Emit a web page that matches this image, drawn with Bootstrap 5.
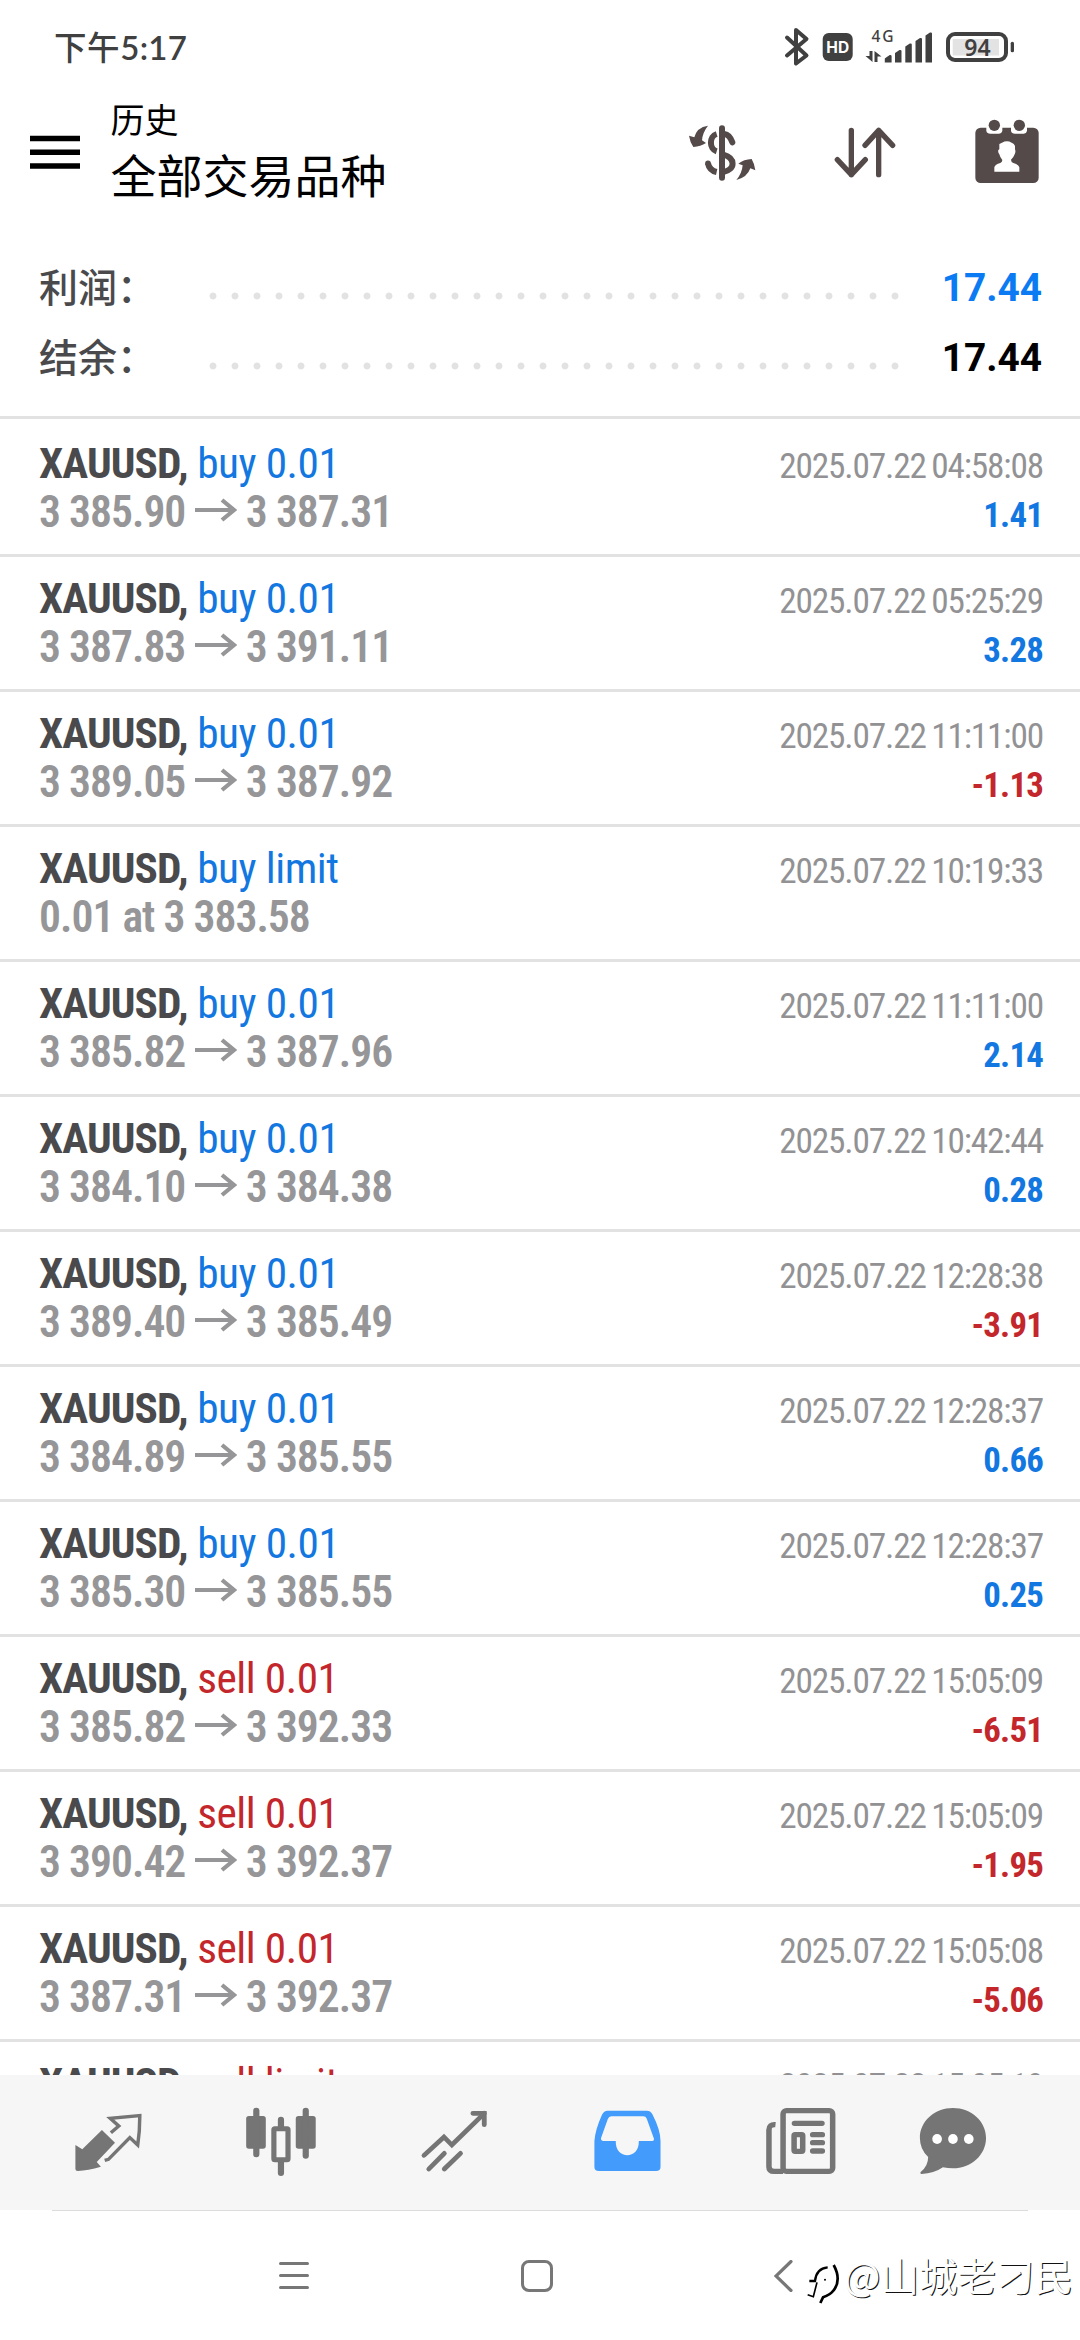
<!DOCTYPE html>
<html lang="zh-CN">
<head>
<meta charset="utf-8">
<meta name="viewport" content="width=device-width, initial-scale=1">
<title>历史</title>
<link href="https://cdn.jsdelivr.net/npm/bootstrap@5.3.0/dist/css/bootstrap.min.css" rel="stylesheet">
<style>
  body { width: 1080px; height: 2340px; overflow: hidden; background: #fff; color: #000; font-family: Roboto, "Noto Sans CJK SC", sans-serif; }
  .phone { height: 2340px; }
  .ico { display: block; flex: none; }
  .status { height: 94px; padding: 0 66px 0 54px; color: #404040; }
  .clock { font: 600 33px/94px Lato, "Noto Sans CJK SC", sans-serif; letter-spacing: .3px; margin-top: -2px; }
  .clock .zh { font: 500 32.5px/94px "Noto Sans CJK SC", sans-serif; letter-spacing: .6px; }
  .appbar { height: 138px; }
  .titles { margin-left: 29.5px; font-family: "Noto Sans CJK SC", sans-serif; font-weight: 400; }
  .t-sub { font-size: 34px; line-height: 50px; }
  .t-main { font-size: 46px; line-height: 59px; }
  .summary { height: 187px; padding: 21px 38px 0 39px; border-bottom: 3px solid #e2e2e3; }
  .sum-row { height: 70px; }
  .sum-label { width: 171px; margin: -6px -8px 0 0; font: 500 39px/70px "Noto Sans CJK SC", sans-serif; color: #4a4a4d; }
  .dots { width: 704px; height: 8px; margin-top: 16px; background: radial-gradient(circle at 50% 50%, #e2e2e3 3px, transparent 3.9px) 0 0 / 22px 8px repeat-x; }
  .sum-val { font: 700 38.8px/72px Roboto, sans-serif; }
  .deals { height: 1656px; overflow: hidden; }
  .deal { height: 135px; padding: 18px 37px 0 39px; border-bottom: 3px solid #e2e2e3; font-stretch: 75%; }
  .deal:first-child { height: 138px; padding-top: 21px; }
  .ln { height: 48px; line-height: 48px; white-space: nowrap; }
  .sym { font-size: 43.3px; letter-spacing: -.45px; }
  .sym b { color: #4a4a4d; font-weight: 700; letter-spacing: -.9px; }
  .prc { font-size: 43.7px; font-weight: 650; color: #969698; letter-spacing: -1px; }
  .dt { font-size: 35.3px; color: #929294; letter-spacing: -1.15px; word-spacing: -1.5px; }
  .val { font-size: 34.8px; font-weight: 700; letter-spacing: -.8px; }
  .c-buy { color: #1277e0; }
  .c-profit { color: #0a7bf3; }
  .c-sell { color: #c3272c; }
  .arr { margin: 0 8.500px 0 10px; vertical-align: baseline; position: relative; top: -5px; }
  .tabs { height: 135px; background: #f6f6f6; padding-left: 68px; gap: 93px; color: #757575; }
  .tabs .short { margin-left: -20px; }
  .sysnav { height: 130px; }
  .sysnav hr { width: 976px; height: 1px; margin: 0 auto; border: 0; background: #dcdcdc; opacity: 1; }
  .keys { height: 129px; padding-left: 279px; color: #777; }
  .wm { position: absolute; left: 805px; top: 2249px; color: #fff; font: 400 38.5px/50px "Noto Sans CJK SC", sans-serif; text-shadow: 1px 1px 0 #111; white-space: nowrap; }
</style>
</head>
<body>
<svg width="0" height="0" class="position-absolute"><symbol id="arr" viewBox="0 0 42 24"><path d="M0 12H38M27 2L39 12L27 22" fill="none" stroke="#969698" stroke-width="4.2"/></symbol></svg>
<div class="phone d-flex flex-column position-relative">
  <header class="status d-flex justify-content-between align-items-center">
    <div class="clock"><span class="zh">下午</span>5:17</div>
    <svg class="ico" width="234" height="50" viewBox="780 22 234 50" fill="#404040" font-family="Inter, sans-serif">
      <path d="M787 37.5L806.500 55.500L796 63.500V30L806.500 39L787 55.500" fill="none" stroke="#404040" stroke-width="4" stroke-linecap="round" stroke-linejoin="round"/>
      <rect x="822.700" y="33" width="30" height="28" rx="6"/>
      <text x="837.700" y="52.700" font-size="15.500" font-weight="700" fill="#fff" text-anchor="middle">HD</text>
      <text x="871.500" y="42" font-size="15.500" font-family="Noto Sans" font-weight="500" textLength="22">4G</text>
      <path d="M869.500 51h3v11l-7-6h4zM874.500 62V51l7 5.500h-4V62z"/>
      <path d="M884.800 62.500V58.500l2-1.500 3-2q1.500-.5 1.800 1v6.500zM895 62.500V53l4.500-3q2-.5 2 1v11.500zM905.300 62.500V46.500l4.500-3q2-.5 2 1v18zM915.500 62.500V41l4.500-3q2-.5 2 1v23.500zM925.500 62.500V35.500l4.500-3q2-.5 2 1v29z"/>
      <rect x="948" y="34" width="58" height="26" rx="7" fill="none" stroke="#404040" stroke-width="4"/>
      <rect x="952.700" y="39" width="46.300" height="16.500" fill="#e3e3e3"/>
      <rect x="1010.700" y="41.700" width="3.300" height="10.600" rx="1.600"/>
      <text x="977.500" y="55.700" font-size="23" font-family="Noto Sans" font-weight="600" text-anchor="middle">94</text>
    </svg>
  </header>

  <nav class="appbar d-flex">
    <svg class="ico ms-4" style="margin-top:10px" width="57" height="96" viewBox="24 104 57 96"><path d="M30 138.500h50M30 152.300h50M30 166h50" stroke="#000" stroke-width="5.600"/></svg>
    <div class="titles"><div class="t-sub">历史</div><div class="t-main">全部交易品种</div></div>
    <svg class="ico ms-auto" width="75" height="110" viewBox="135 280 225 330" preserveAspectRatio="none">
      <g fill="none" stroke="#554a4a" stroke-width="18">
        <path d="M246 383V531" stroke-linecap="round"/>
        <path d="M230 400C207 407 207 445 230 452" />
        <path d="M253 400Q269 402 277 425" stroke-linecap="round"/>
        <path d="M250 462C286 472 288 506 250 514"/>
        <path d="M204 488Q208 509 230 514"/>
      </g>
      <circle cx="204" cy="488" r="8.500" fill="#554a4a"/>
      <path d="M204 375Q170 380 163 410L147 405Q150 425 160 439Q182 438 198 427L186 419Q188 395 204 375ZM289 538Q322 530 331 503L346 509Q343 488 335 475Q312 476 295 489L308 494Q306 518 289 538Z" fill="#554a4a"/>
    </svg>
    <svg class="ico" style="margin-left:70px" width="70" height="110" viewBox="570 280 210 330"><path d="M634 389V522M592 477L634 522L676 477M716 522V389M675 434L716 389L758 434" fill="none" stroke="#554a4a" stroke-width="16" stroke-linecap="round" stroke-linejoin="round"/></svg>
    <svg class="ico" style="margin:0 34px 0 68px" width="78" height="110" viewBox="983 280 234 330">
      <rect x="1005" y="381" width="190" height="166" rx="16" fill="#554a4a"/>
      <g fill="#fff"><path d="M1038 376H1086V391Q1084 399 1076 399H1050Q1040 399 1038 391ZM1112 376H1160V391Q1158 399 1150 399H1124Q1114 399 1112 391Z"/>
      <path d="M1062 513V500Q1064 491 1080 487Q1086 484 1086 478Q1079 470 1077 461Q1072 455 1074 448L1077 446V430L1085 426Q1100 418 1114 426Q1122 428 1124 436V446Q1127 452 1123 461Q1120 470 1112 477Q1112 484 1119 487Q1135 492 1137 500V513Z"/></g>
      <circle cx="1062" cy="374" r="17" fill="#554a4a"/><circle cx="1137" cy="374" r="17" fill="#554a4a"/>
    </svg>
  </nav>

  <section class="summary">
    <div class="sum-row d-flex align-items-center"><span class="sum-label">利润：</span><span class="dots"></span><span class="sum-val ms-auto c-profit">17.44</span></div>
    <div class="sum-row d-flex align-items-center"><span class="sum-label">结余：</span><span class="dots"></span><span class="sum-val ms-auto">17.44</span></div>
  </section>

  <main class="deals">
    <div class="deal"><div class="ln d-flex justify-content-between align-items-baseline"><span class="sym"><b>XAUUSD,</b> <span class="c-buy">buy 0.01</span></span><span class="dt">2025.07.22 04:58:08</span></div><div class="ln d-flex justify-content-between align-items-baseline"><span class="prc">3 385.90<svg class="arr" width="42" height="24"><use href="#arr"/></svg>3 387.31</span><span class="val c-buy">1.41</span></div></div>
    <div class="deal"><div class="ln d-flex justify-content-between align-items-baseline"><span class="sym"><b>XAUUSD,</b> <span class="c-buy">buy 0.01</span></span><span class="dt">2025.07.22 05:25:29</span></div><div class="ln d-flex justify-content-between align-items-baseline"><span class="prc">3 387.83<svg class="arr" width="42" height="24"><use href="#arr"/></svg>3 391.11</span><span class="val c-buy">3.28</span></div></div>
    <div class="deal"><div class="ln d-flex justify-content-between align-items-baseline"><span class="sym"><b>XAUUSD,</b> <span class="c-buy">buy 0.01</span></span><span class="dt">2025.07.22 11:11:00</span></div><div class="ln d-flex justify-content-between align-items-baseline"><span class="prc">3 389.05<svg class="arr" width="42" height="24"><use href="#arr"/></svg>3 387.92</span><span class="val c-sell">-1.13</span></div></div>
    <div class="deal"><div class="ln d-flex justify-content-between align-items-baseline"><span class="sym"><b>XAUUSD,</b> <span class="c-buy">buy limit</span></span><span class="dt">2025.07.22 10:19:33</span></div><div class="ln d-flex align-items-baseline"><span class="prc">0.01 at 3 383.58</span></div></div>
    <div class="deal"><div class="ln d-flex justify-content-between align-items-baseline"><span class="sym"><b>XAUUSD,</b> <span class="c-buy">buy 0.01</span></span><span class="dt">2025.07.22 11:11:00</span></div><div class="ln d-flex justify-content-between align-items-baseline"><span class="prc">3 385.82<svg class="arr" width="42" height="24"><use href="#arr"/></svg>3 387.96</span><span class="val c-buy">2.14</span></div></div>
    <div class="deal"><div class="ln d-flex justify-content-between align-items-baseline"><span class="sym"><b>XAUUSD,</b> <span class="c-buy">buy 0.01</span></span><span class="dt">2025.07.22 10:42:44</span></div><div class="ln d-flex justify-content-between align-items-baseline"><span class="prc">3 384.10<svg class="arr" width="42" height="24"><use href="#arr"/></svg>3 384.38</span><span class="val c-buy">0.28</span></div></div>
    <div class="deal"><div class="ln d-flex justify-content-between align-items-baseline"><span class="sym"><b>XAUUSD,</b> <span class="c-buy">buy 0.01</span></span><span class="dt">2025.07.22 12:28:38</span></div><div class="ln d-flex justify-content-between align-items-baseline"><span class="prc">3 389.40<svg class="arr" width="42" height="24"><use href="#arr"/></svg>3 385.49</span><span class="val c-sell">-3.91</span></div></div>
    <div class="deal"><div class="ln d-flex justify-content-between align-items-baseline"><span class="sym"><b>XAUUSD,</b> <span class="c-buy">buy 0.01</span></span><span class="dt">2025.07.22 12:28:37</span></div><div class="ln d-flex justify-content-between align-items-baseline"><span class="prc">3 384.89<svg class="arr" width="42" height="24"><use href="#arr"/></svg>3 385.55</span><span class="val c-buy">0.66</span></div></div>
    <div class="deal"><div class="ln d-flex justify-content-between align-items-baseline"><span class="sym"><b>XAUUSD,</b> <span class="c-buy">buy 0.01</span></span><span class="dt">2025.07.22 12:28:37</span></div><div class="ln d-flex justify-content-between align-items-baseline"><span class="prc">3 385.30<svg class="arr" width="42" height="24"><use href="#arr"/></svg>3 385.55</span><span class="val c-buy">0.25</span></div></div>
    <div class="deal"><div class="ln d-flex justify-content-between align-items-baseline"><span class="sym"><b>XAUUSD,</b> <span class="c-sell">sell 0.01</span></span><span class="dt">2025.07.22 15:05:09</span></div><div class="ln d-flex justify-content-between align-items-baseline"><span class="prc">3 385.82<svg class="arr" width="42" height="24"><use href="#arr"/></svg>3 392.33</span><span class="val c-sell">-6.51</span></div></div>
    <div class="deal"><div class="ln d-flex justify-content-between align-items-baseline"><span class="sym"><b>XAUUSD,</b> <span class="c-sell">sell 0.01</span></span><span class="dt">2025.07.22 15:05:09</span></div><div class="ln d-flex justify-content-between align-items-baseline"><span class="prc">3 390.42<svg class="arr" width="42" height="24"><use href="#arr"/></svg>3 392.37</span><span class="val c-sell">-1.95</span></div></div>
    <div class="deal"><div class="ln d-flex justify-content-between align-items-baseline"><span class="sym"><b>XAUUSD,</b> <span class="c-sell">sell 0.01</span></span><span class="dt">2025.07.22 15:05:08</span></div><div class="ln d-flex justify-content-between align-items-baseline"><span class="prc">3 387.31<svg class="arr" width="42" height="24"><use href="#arr"/></svg>3 392.37</span><span class="val c-sell">-5.06</span></div></div>
    <div class="deal"><div class="ln d-flex justify-content-between align-items-baseline"><span class="sym"><b>XAUUSD,</b> <span class="c-sell">sell limit</span></span><span class="dt">2025.07.22 15:05:19</span></div></div>
  </main>

  <nav class="tabs d-flex align-items-center">
    <svg class="ico" width="80" height="80" viewBox="197.500 189 232.300 240" preserveAspectRatio="none">
      <path d="M296 270L334 308L281 366L293 380Q255 391 226 393Q219 393 219 387V315L239 328Z" fill="currentColor"/>
      <path d="M322 278L345 258L320 235L406 227Q406 275 400 315L377 293L315 358L304 361" fill="none" stroke="currentColor" stroke-width="10"/>
    </svg>
    <svg class="ico" width="80" height="80" viewBox="700 189 232.300 240" preserveAspectRatio="none" fill="currentColor">
      <rect x="715" y="228" width="57" height="98" rx="8"/><rect x="859" y="228" width="58" height="98" rx="8"/>
      <path d="M744.500 212V343M888 212V347M816 239V262M816 364V399" stroke="currentColor" stroke-width="18" stroke-linecap="round"/>
      <rect x="795.500" y="266.500" width="41" height="93" rx="3" fill="none" stroke="currentColor" stroke-width="15"/>
    </svg>
    <svg class="ico" width="80" height="80" viewBox="1202 189 232.300 240" preserveAspectRatio="none" fill="none" stroke="currentColor" stroke-width="14">
      <path d="M1231 346L1289 291L1312 315L1406 220" stroke-linecap="round"/><path d="M1373 220H1406V254" stroke-linecap="round"/>
      <path d="M1245 387L1290 340M1290 387L1337 340" stroke-linecap="round"/>
    </svg>
    <svg class="ico" width="80" height="80" viewBox="136.500 189 232.300 240" preserveAspectRatio="none">
      <path fill="#439cfc" fill-rule="evenodd" d="M196 212H310Q321 212 326 222Q350 270 350 303V380Q350 393 337 393H171Q158 393 158 380V303Q160 270 180 224Q186 212 196 212ZM207 229Q200 229 197 237L177 295Q177 303 184 303H220C218 360 289 360 287 303H326Q332 303 331 296L310 236Q307 229 300 229Z"/>
    </svg>
    <svg class="ico" width="80" height="80" viewBox="639 189 232.300 240" preserveAspectRatio="none" fill="none" stroke="currentColor" stroke-width="16">
      <rect x="706" y="212" width="144" height="182" rx="10"/>
      <path d="M684 254Q665 252 665 270V380Q665 394 680 394H706" />
      <path d="M739 250H819M792 284H820M792 308H820M792 333H820" stroke-linecap="round"/>
      <rect x="738" y="284" width="25" height="50" rx="3"/>
    </svg>
    <svg class="ico short" width="80" height="80" viewBox="1083 189 232.300 240" preserveAspectRatio="none">
      <path fill="currentColor" d="M1199 204C1252 204 1295 243 1295 294C1295 345 1252 385 1199 385Q1184 385 1170 382Q1145 400 1108 402Q1102 400 1106 395Q1127 378 1127 351Q1103 328 1103 294C1103 243 1146 204 1199 204Z"/>
      <g fill="#fff"><ellipse cx="1153" cy="297" rx="14" ry="15"/><ellipse cx="1199" cy="297" rx="14" ry="15"/><ellipse cx="1245" cy="297" rx="14" ry="15"/></g>
    </svg>
  </nav>

  <footer class="sysnav">
    <hr>
    <div class="keys d-flex align-items-center">
      <svg class="ico" width="30" height="32" viewBox="0 0 30 32"><path d="M1.500 3.500H28.500M1.500 15.500H28.500M1.500 27.500H28.500" stroke="currentColor" stroke-width="3" stroke-linecap="round"/></svg>
      <svg class="ico" style="margin:0 221px 0 212px" width="32" height="32" viewBox="0 0 32 32"><rect x="1.500" y="1.500" width="29" height="29" rx="6.500" fill="none" stroke="currentColor" stroke-width="3"/></svg>
      <svg class="ico" width="19" height="32" viewBox="0 0 19 32"><path d="M17 1.500L2 16L17 30.500" fill="none" stroke="currentColor" stroke-width="3.200" stroke-linecap="round"/></svg>
    </div>
  </footer>
  <div class="wm d-flex align-items-start">
    <svg class="ico" style="margin-top:4px" width="39" height="54" viewBox="0 0 117 162" fill="none" stroke="#000"><path d="M13 84H30Q34 46 68 43" stroke-width="7"/><path d="M86 36Q110 80 86 112Q76 126 54 133L46 150" stroke-width="8"/><path d="M36 88L25 131L8 125" stroke-width="5"/><circle cx="60" cy="80" r="3" fill="#000" stroke="none"/></svg>
    <span>@山城老刁民</span>
  </div>
</div>
<script src="https://cdn.jsdelivr.net/npm/bootstrap@5.3.0/dist/js/bootstrap.bundle.min.js"></script>
</body>
</html>
